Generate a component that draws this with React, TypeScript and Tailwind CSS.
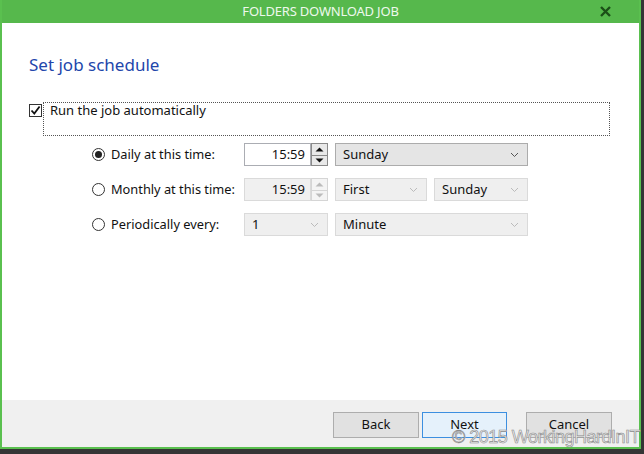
import React from "react";

const font = { fontFamily: '"Noto Sans", "Open Sans", sans-serif' };

function Chevron({ color = "#444" }: { color?: string }) {
  return (
    <svg width="9" height="6" viewBox="0 0 9 6">
      <path d="M1 1 L4.5 4.5 L8 1" fill="none" stroke={color} strokeWidth="1" />
    </svg>
  );
}

function Combo({ text, w, enabled }: { text: string; w: string; enabled?: boolean }) {
  return (
    <div
      className={`${w} h-[23px] flex items-center justify-between pl-[7px] pr-[8px] border ${
        enabled ? "bg-[#e5e5e5] border-[#acacac]" : "bg-[#efefef] border-[#dadada]"
      } text-[13px] text-[#111]`}
    >
      <span>{text}</span>
      <Chevron color={enabled ? "#555" : "#bbb"} />
    </div>
  );
}

function Spin({ enabled }: { enabled?: boolean }) {
  const c = enabled ? "#111" : "#bbb";
  return (
    <div className="flex h-[23px]">
      <div
        className={`w-[67px] h-full border flex items-center justify-end pr-[5px] text-[13px] text-[#111] ${
          enabled ? "bg-white border-[#abadb3]" : "bg-[#f0f0f0] border-[#dadada]"
        }`}
      >
        15:59
      </div>
      <div className="w-[17px] h-full flex flex-col">
        <div className={`h-1/2 border border-b-0 flex items-center justify-center ${enabled ? "border-[#8a8a8a] bg-[#e9e9e9]" : "border-[#d5d5d5] bg-[#f4f4f4]"}`}>
          <svg width="9" height="5" viewBox="0 0 9 5"><path d="M0.5 4.5 L4.5 0.5 L8.5 4.5 Z" fill={c} /></svg>
        </div>
        <div className={`h-1/2 border flex items-center justify-center ${enabled ? "border-[#8a8a8a] bg-[#e9e9e9]" : "border-[#d5d5d5] bg-[#f4f4f4]"}`}>
          <svg width="9" height="5" viewBox="0 0 9 5"><path d="M0.5 0.5 L4.5 4.5 L8.5 0.5 Z" fill={c} /></svg>
        </div>
      </div>
    </div>
  );
}

function Radio({ checked, label }: { checked?: boolean; label: string }) {
  return (
    <div className="flex items-center w-[153px]">
      <div className="w-[13px] h-[13px] rounded-full border border-[#333] bg-white flex items-center justify-center ml-[1px]">
        {checked && <div className="w-[7px] h-[7px] rounded-full bg-[#222]" />}
      </div>
      <span className="ml-[6px] text-[12.8px] text-[#111]">{label}</span>
    </div>
  );
}

export default function App() {
  return (
    <div className="w-[644px] h-[454px] bg-[#353535] relative overflow-hidden" style={font}>
      <div className="w-[641px] h-[449px] flex flex-col border-l-2 border-r-2 border-b-2 border-[#5ac04f] bg-white">
        <div className="h-[23px] bg-[#56b84c] flex items-center justify-center relative shrink-0">
          <span className="text-[13px] text-[#eef8ec] tracking-[-0.2px]">FOLDERS DOWNLOAD JOB</span>
          <svg className="absolute right-[28px] top-[6px]" width="11" height="11" viewBox="0 0 11 11">
            <path d="M1 1 L10 10 M10 1 L1 10" stroke="#1b4f17" strokeWidth="2.4" />
          </svg>
        </div>
        <div className="flex-1 bg-white flex flex-col pl-[27px]">
          <div className="mt-[30px] text-[17px] text-[#2246ab] leading-[24px]">Set job schedule</div>
          <div className="mt-[25px] flex items-start">
            <div className="mt-[2px] w-[13px] h-[13px] border border-[#333] bg-white flex items-center justify-center">
              <svg width="11" height="11" viewBox="0 0 11 11">
                <path d="M1.5 5.5 L4.3 8.6 L9.6 1.5" fill="none" stroke="#111" strokeWidth="1.8" />
              </svg>
            </div>
            <div className="ml-[1px] w-[567px] h-[34px] border border-dotted border-[#555] pl-[6px] text-[13px] text-[#111] leading-[14px]">
              Run the job automatically
            </div>
          </div>
          <div className="ml-[62px] mt-[7px] flex flex-col gap-[12px]">
            <div className="flex items-center">
              <Radio checked label="Daily at this time:" />
              <Spin enabled />
              <div className="ml-[7px]"><Combo text="Sunday" w="w-[193px]" enabled /></div>
            </div>
            <div className="flex items-center">
              <Radio label="Monthly at this time:" />
              <Spin />
              <div className="ml-[7px]"><Combo text="First" w="w-[92px]" /></div>
              <div className="ml-[7px]"><Combo text="Sunday" w="w-[94px]" /></div>
            </div>
            <div className="flex items-center">
              <Radio label="Periodically every:" />
              <Combo text="1" w="w-[84px]" />
              <div className="ml-[7px]"><Combo text="Minute" w="w-[193px]" /></div>
            </div>
          </div>
        </div>
        <div className="h-[47px] bg-[#f0f0f0] flex items-start justify-end pr-[27px] pt-[12px] gap-[3px] shrink-0">
          <button className="w-[86px] h-[26px] bg-[#e1e1e1] border border-[#adadad] text-[13px] text-[#111]">Back</button>
          <button className="w-[85px] h-[26px] bg-[#e5f1fb] border border-[#3c8fe0] text-[13px] text-[#111] mr-[16px]">Next</button>
          <button className="w-[86px] h-[26px] bg-[#e1e1e1] border border-[#adadad] text-[13px] text-[#111]">Cancel</button>
        </div>
      </div>
      <div
        className="absolute left-[452px] top-[427px] whitespace-nowrap text-[18px] leading-[20px] text-[#ececec] tracking-[-0.5px]"
        style={{ fontFamily: '"Liberation Sans", sans-serif', WebkitTextStroke: "0.6px #8a8a8a" }}
      >
        © 2015 WorkingHardInIT
      </div>
    </div>
  );
}
